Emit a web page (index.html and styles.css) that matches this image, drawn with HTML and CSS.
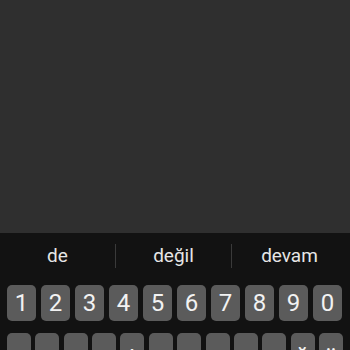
FILE: index.html
```html
<!DOCTYPE html>
<html lang="tr">
<head>
  <meta charset="UTF-8" />
  <meta name="viewport" content="width=device-width, initial-scale=1.0" />
  <title>Klavye</title>
  <link rel="stylesheet" href="styles.css">
</head>
<body>
  <div class="screen"></div>

  <div class="keyboard">
    <div class="suggestions">
      <div class="suggestion">de</div>
      <div class="suggestion">değil</div>
      <div class="suggestion">devam</div>
    </div>

    <div class="row numbers">
      <div class="key">1</div>
      <div class="key">2</div>
      <div class="key">3</div>
      <div class="key">4</div>
      <div class="key">5</div>
      <div class="key">6</div>
      <div class="key">7</div>
      <div class="key">8</div>
      <div class="key">9</div>
      <div class="key">0</div>
    </div>

    <div class="row letters">
      <div class="key">q</div>
      <div class="key">w</div>
      <div class="key">e</div>
      <div class="key">r</div>
      <div class="key">t</div>
      <div class="key">y</div>
      <div class="key">u</div>
      <div class="key">ı</div>
      <div class="key">o</div>
      <div class="key">p</div>
      <div class="key">ğ</div>
      <div class="key">ü</div>
    </div>
  </div>
</body>
</html>
```

FILE: styles.css
```css
body {
  margin: 0;
  background-color: #121212;
  font-family: Roboto, "Liberation Sans", sans-serif;
  overflow: hidden;
}
.screen {
  height: 233px;
  background-color: #2f2f2f;
}
.keyboard {
  background-color: #121212;
}
.suggestions {
  display: flex;
  height: 52px;
  align-items: center;
}
.suggestion {
  width: 115px;
  text-align: center;
  color: #e6e6e6;
  font-size: 19px;
  line-height: 24px;
  position: relative;
  top: -3px;
}
.suggestion + .suggestion {
  border-left: 1px solid #3a3a3a;
}
.row {
  display: flex;
  padding-left: 7px;
}
.key {
  background-color: #5b5b5b;
  color: #f2f2f2;
  border-radius: 5px;
  display: flex;
  align-items: center;
  justify-content: center;
  font-size: 24px;
}
.numbers {
  gap: 5px;
  height: 36px;
}
.numbers .key {
  width: 29px;
}
.letters {
  gap: 4.36px;
  margin-top: 12px;
  height: 44px;
}
.letters .key {
  width: 24px;
  padding-top: 3px;
  box-sizing: border-box;
}
```
